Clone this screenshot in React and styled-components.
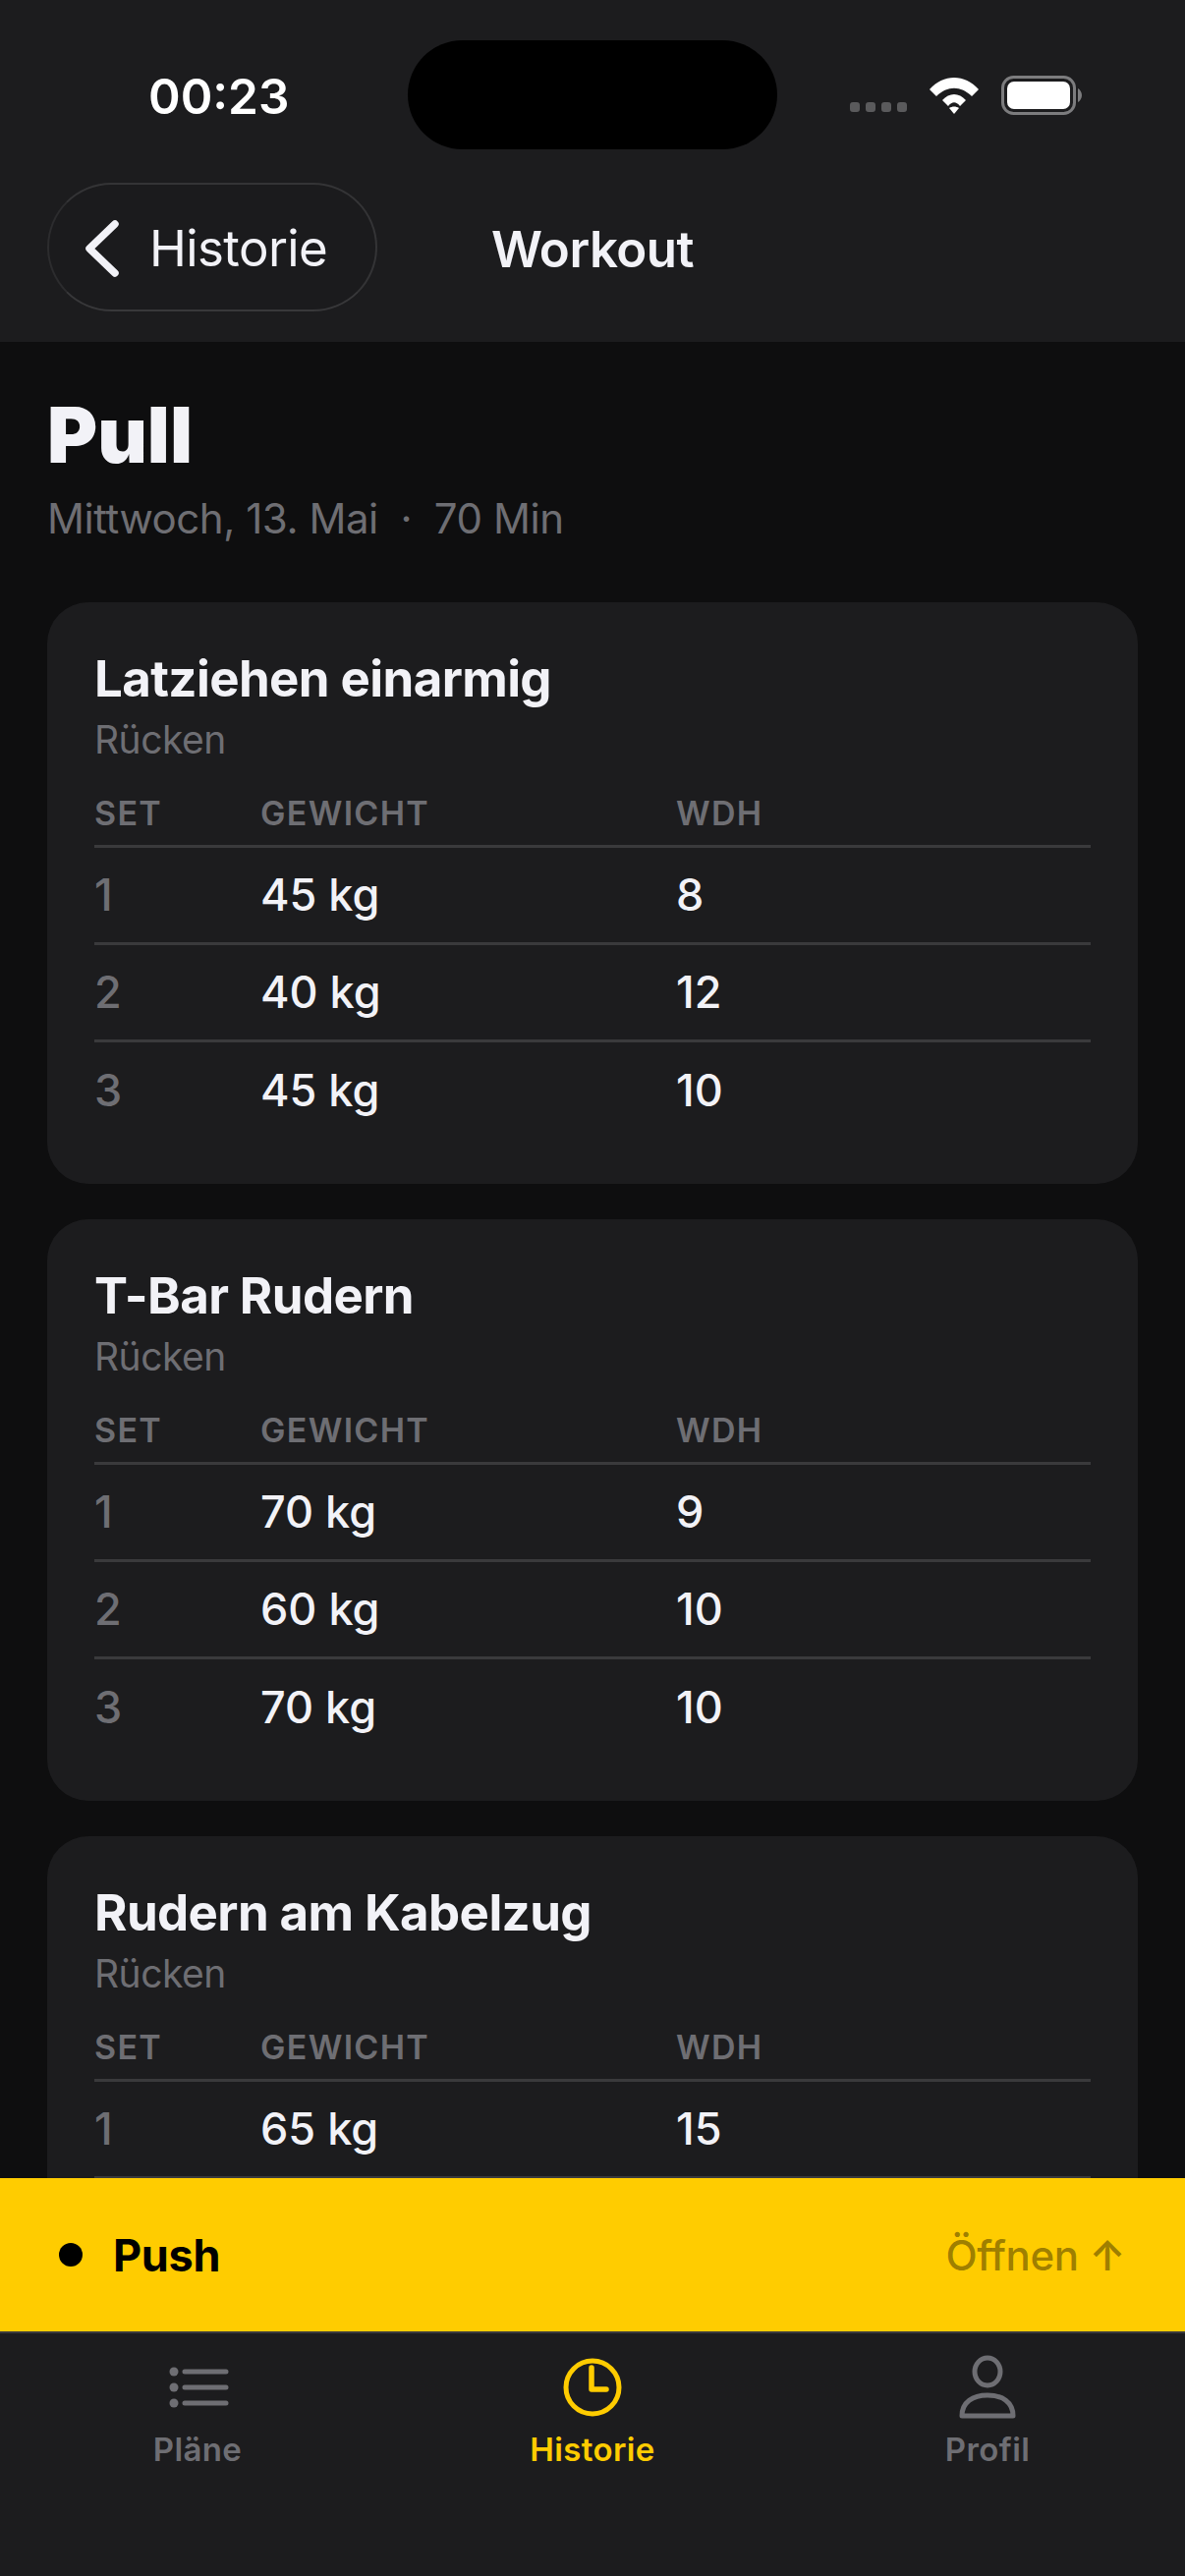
import React from "react";
import styled, { createGlobalStyle } from "styled-components";

const workouts = [
  {
    name: "Latziehen einarmig",
    muscle: "Rücken",
    sets: [
      ["45 kg", "8"],
      ["40 kg", "12"],
      ["45 kg", "10"],
    ],
  },
  {
    name: "T-Bar Rudern",
    muscle: "Rücken",
    sets: [
      ["70 kg", "9"],
      ["60 kg", "10"],
      ["70 kg", "10"],
    ],
  },
  {
    // the rest of this card sits under the active workout bar
    name: "Rudern am Kabelzug",
    muscle: "Rücken",
    sets: [["65 kg", "15"]],
    cutOff: true,
  },
];

const WifiIcon = () => (
  <svg width="52" height="38" viewBox="0 0 52 38" fill="none">
    <path d="M1 13C15-3 37-3 51 13L44 20C33 9 19 9 8 20Z" fill="#fff" />
    <path d="M14 24C21 16 31 16 38 24L32 30C28 25 24 25 20 30Z" fill="#fff" />
    <path d="M21 32C24 30 28 30 31 32L26 38Z" fill="#fff" />
  </svg>
);

const BatteryIcon = () => (
  <svg width="82" height="40" viewBox="0 0 82 40" fill="none">
    <rect x="1.5" y="1.5" width="73" height="37" rx="11" stroke="#7c7c7e" strokeWidth="3" />
    <rect x="6" y="6" width="64" height="28" rx="7" fill="#fff" />
    <path d="M78 13C80 14 82 17 82 20C82 23 80 26 78 27Z" fill="#7c7c7e" />
  </svg>
);

const ChevronIcon = () => (
  <svg width="36" height="58" viewBox="0 0 36 58" fill="none">
    <path d="M31 4L5 29L31 54" stroke="#f2f2f7" strokeWidth="7.5" strokeLinecap="round" strokeLinejoin="round" />
  </svg>
);

const ListIcon = () => (
  <svg width="66" height="66" viewBox="0 0 66 66" fill="none" stroke="currentColor">
    <circle cx="9" cy="17" r="4.5" fill="currentColor" stroke="none" />
    <circle cx="9" cy="33" r="4.5" fill="currentColor" stroke="none" />
    <circle cx="9" cy="49" r="4.5" fill="currentColor" stroke="none" />
    <path d="M20 17H62M20 33H62M20 49H62" strokeWidth="5" strokeLinecap="round" />
  </svg>
);

const ClockIcon = () => (
  <svg width="66" height="66" viewBox="0 0 66 66" fill="none" stroke="currentColor">
    <circle cx="33" cy="33" r="27" strokeWidth="5" />
    <path d="M32 13V35H47" strokeWidth="5.5" strokeLinecap="round" strokeLinejoin="round" />
  </svg>
);

const PersonIcon = () => (
  <svg width="66" height="66" viewBox="0 0 66 66" fill="none" stroke="currentColor">
    <ellipse cx="33" cy="17" rx="13" ry="14" strokeWidth="5" />
    <path d="M7 62C7 48 18 41 33 41C48 41 59 48 59 62Z" strokeWidth="5" strokeLinejoin="round" />
  </svg>
);

const App = () => (
  <>
    <GlobalStyle />
    <Screen>
      <Header>
        <StatusBar>
          <Time>00:23</Time>
          <Island />
          <StatusIcons>
            <SignalDots>
              <i />
              <i />
              <i />
              <i />
            </SignalDots>
            <WifiIcon />
            <BatteryIcon />
          </StatusIcons>
        </StatusBar>
        <NavBar>
          <BackButton>
            <ChevronIcon />
            Historie
          </BackButton>
          <NavTitle>Workout</NavTitle>
        </NavBar>
      </Header>

      <Content>
        <PageTitle>Pull</PageTitle>
        <PageMeta>Mittwoch, 13. Mai&nbsp; ·&nbsp; 70 Min</PageMeta>
        {workouts.map(({ name, muscle, sets, cutOff }) => (
          <Card key={name}>
            <CardTitle>{name}</CardTitle>
            <CardMuscle>{muscle}</CardMuscle>
            <TableHead>
              <span>SET</span>
              <span>GEWICHT</span>
              <span>WDH</span>
            </TableHead>
            {sets.map(([weight, reps], index) => (
              <TableRow key={index} $divider={cutOff || index < sets.length - 1}>
                <SetNumber>{index + 1}</SetNumber>
                <span>{weight}</span>
                <span>{reps}</span>
              </TableRow>
            ))}
          </Card>
        ))}
      </Content>

      <ActiveBar>
        <ActiveDot />
        <ActiveName>Push</ActiveName>
        <ActiveOpen>
          Öffnen <ActiveArrow>↑</ActiveArrow>
        </ActiveOpen>
      </ActiveBar>

      <TabBar>
        <Tab>
          <ListIcon />
          Pläne
        </Tab>
        <Tab $active>
          <ClockIcon />
          Historie
        </Tab>
        <Tab>
          <PersonIcon />
          Profil
        </Tab>
      </TabBar>
    </Screen>
  </>
);

const GlobalStyle = createGlobalStyle`
  html, body {
    margin: 0;
    padding: 0;
    background: #0e0e0f;
  }
  * {
    box-sizing: border-box;
  }
`;

const Screen = styled.div`
  width: 1206px;
  height: 2622px;
  display: flex;
  flex-direction: column;
  overflow: hidden;
  background: #0e0e0f;
  color: #f2f2f7;
  font-family: Inter, "Liberation Sans", sans-serif;
`;

const Header = styled.header`
  flex: none;
  height: 348px;
  padding-top: 41px;
  background: #1c1c1e;
`;

const StatusBar = styled.div`
  display: grid;
  grid-template-columns: 415px 376px 1fr;
  height: 111px;
  align-items: center;
`;

const Time = styled.div`
  padding: 3px 0 0 151px;
  font-size: 49.5px;
  font-weight: 600;
  color: #fff;
`;

const Island = styled.div`
  height: 111px;
  border-radius: 56px;
  background: #000;
`;

const StatusIcons = styled.div`
  display: flex;
  align-items: center;
  gap: 22px;
  padding-left: 74px;
`;

const SignalDots = styled.div`
  display: flex;
  gap: 6px;
  padding-top: 24px;

  i {
    width: 10px;
    height: 10px;
    border-radius: 3px;
    background: #5a5a5c;
  }
`;

const NavBar = styled.nav`
  display: grid;
  grid-template-columns: 1fr auto 1fr;
  align-items: center;
  margin-top: 34px;
  padding: 0 48px;
`;

const BackButton = styled.div`
  justify-self: start;
  display: flex;
  align-items: center;
  gap: 30px;
  width: 336px;
  height: 131px;
  padding: 2px 0 0 36px;
  border: 2px solid #343436;
  border-left-color: #2c2c2e;
  border-bottom-color: #38383a;
  border-radius: 66px;
  background: #1b1b1d;
  font-size: 51px;
  font-weight: 400;
  letter-spacing: -0.6px;
`;

const NavTitle = styled.div`
  padding-top: 3px;
  font-size: 51px;
  font-weight: 600;
  letter-spacing: -0.5px;
`;

const Content = styled.main`
  flex: 1;
  min-height: 0;
  overflow: hidden;
  padding: 53px 48px 0;
`;

const PageTitle = styled.h1`
  margin: 0;
  font-size: 78px;
  font-weight: 900;
  line-height: 84px;
`;

const PageMeta = styled.div`
  margin-top: 18px;
  font-size: 42px;
  line-height: 50px;
  letter-spacing: -0.45px;
  color: #6e6e73;
`;

const Card = styled.section`
  margin-top: 36px;
  padding: 48px 48px 45px;
  border-radius: 42px;
  background: #1c1c1e;

  ${PageMeta} + & {
    margin-top: 60px;
  }
`;

const CardTitle = styled.h2`
  margin: 0;
  font-size: 51px;
  font-weight: 700;
  line-height: 60px;
  letter-spacing: -0.6px;
`;

const CardMuscle = styled.div`
  margin-top: 8px;
  font-size: 39px;
  line-height: 48px;
  letter-spacing: -0.5px;
  color: #6e6e73;
`;

const columns = `
  display: grid;
  grid-template-columns: 169px 423px 1fr;
  align-items: center;
`;

const TableHead = styled.div`
  ${columns}
  margin-top: 17px;
  height: 69px;
  border-bottom: 3px solid #3a3a3c;
  font-size: 34px;
  font-weight: 560;
  letter-spacing: 1.3px;
  color: #6e6e73;
`;

const TableRow = styled.div`
  ${columns}
  height: 99px;
  padding-bottom: 2px;
  font-size: 45px;
  font-weight: 540;
  border-bottom: ${({ $divider }) => ($divider ? "3px solid #3a3a3c" : "none")};
`;

const SetNumber = styled.span`
  color: #6e6e73;
`;

const ActiveBar = styled.div`
  flex: none;
  display: flex;
  align-items: center;
  height: 156px;
  padding: 0 61px 0 60px;
  background: #ffcc00;
  color: #000;
`;

const ActiveDot = styled.div`
  width: 24px;
  height: 24px;
  border-radius: 50%;
  background: #000;
`;

const ActiveName = styled.div`
  margin-left: 31px;
  font-size: 45px;
  font-weight: 700;
  letter-spacing: -0.3px;
`;

const ActiveOpen = styled.div`
  margin-left: auto;
  font-size: 42px;
  font-weight: 500;
  letter-spacing: -0.4px;
  color: rgba(0, 0, 0, 0.4);
`;

const ActiveArrow = styled.span`
  font-weight: 600;
`;

const TabBar = styled.nav`
  flex: none;
  display: grid;
  grid-template-columns: repeat(3, 1fr);
  height: 249px;
  border-top: 2px solid #3a3a3c;
  background: #1c1c1e;
  padding-top: 22px;
`;

const Tab = styled.div`
  display: flex;
  flex-direction: column;
  align-items: center;
  gap: 10px;
  font-size: 33px;
  font-weight: 600;
  letter-spacing: 0.4px;
  color: ${({ $active }) => ($active ? "#ffcc00" : "#6e6e73")};
`;

export default App;
